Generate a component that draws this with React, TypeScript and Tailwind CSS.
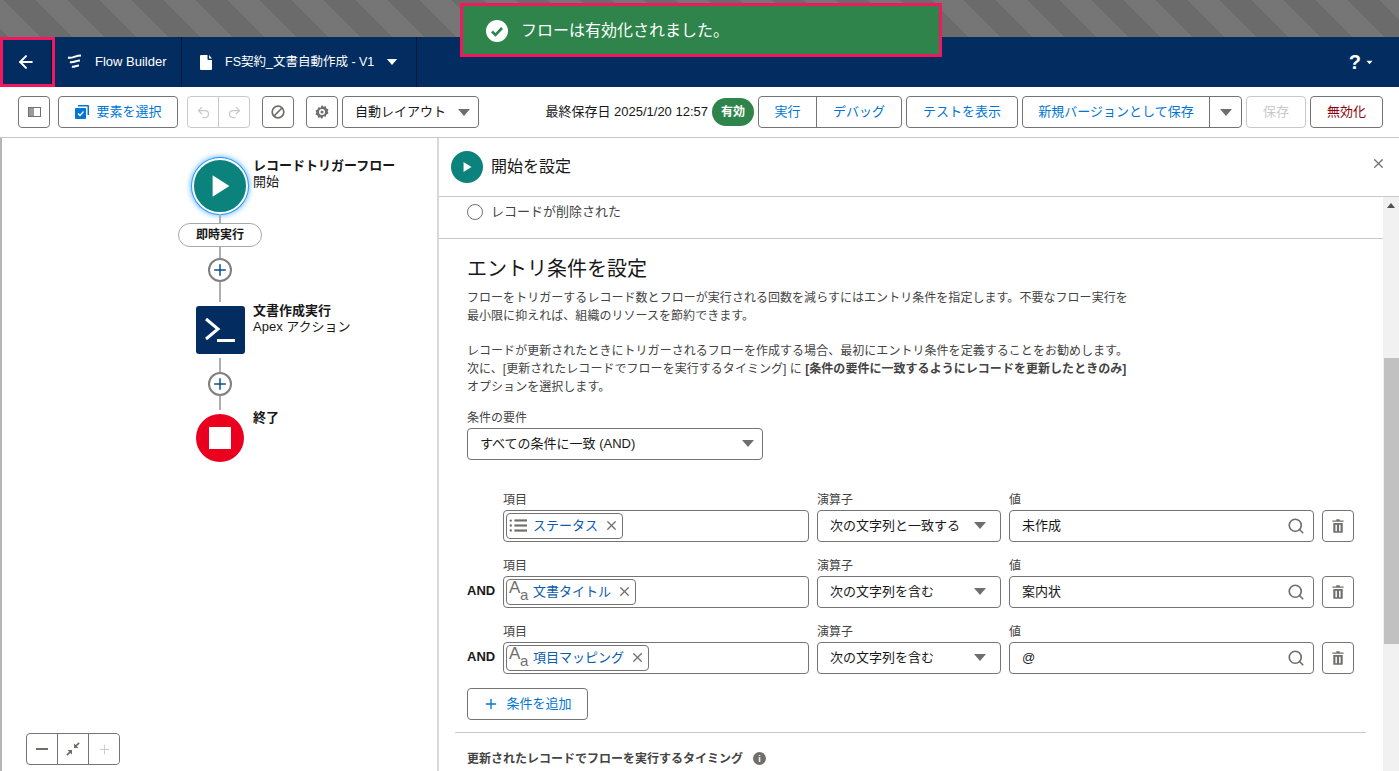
import { ArrowLeft, Plus, Search, X, Undo2, Redo2 } from "lucide-react";

const font = "font-['Liberation_Sans','Noto_Sans_CJK_JP',sans-serif]";

function Caret({ className = "h-[9px] w-[14px]" }: { className?: string }) {
  return (
    <svg viewBox="0 0 14 9" className={className}>
      <path d="M1 1h12L7 8z" fill="currentColor" />
    </svg>
  );
}

function Btn({ children, className = "" }: { children: React.ReactNode; className?: string }) {
  return (
    <div className={`flex h-8 items-center justify-center rounded border border-[#747474] bg-white text-[13px] ${className}`}>
      {children}
    </div>
  );
}

function PlayIcon({ className = "" }: { className?: string }) {
  return (
    <svg viewBox="0 0 16 20" className={className}>
      <path d="M1 1l14 9-14 9z" fill="white" />
    </svg>
  );
}

function TrashIcon() {
  return (
    <svg viewBox="0 0 14 16" className="h-[14px] w-[12px] text-[#706e6b]">
      <path fill="currentColor" d="M5 0h4v1.5h4.5V3H.5V1.5H5zM1.500 4.500h11V15a1 1 0 0 1-1 1h-9a1 1 0 0 1-1-1zM4 6.500V14h1.700V6.500zm4.300 0V14H10V6.500z" />
    </svg>
  );
}

function AaIcon() {
  return (
    <div className="relative h-[24px] w-[18px] shrink-0 text-[#706e6b]">
      <span className="absolute left-0 top-[-2px] text-[17px] font-medium leading-[20px]">A</span>
      <span className="absolute left-[11px] top-[5px] text-[15px] font-medium leading-[20px]">a</span>
    </div>
  );
}

function ListIcon() {
  return (
    <svg viewBox="0 0 20 16" className="h-[15px] w-[18px] shrink-0 text-[#706e6b]">
      <g fill="currentColor">
        <circle cx="2" cy="2.500" r="1.300" />
        <circle cx="2" cy="8" r="1.300" />
        <circle cx="2" cy="13.500" r="1.300" />
        <rect x="6" y="1.200" width="14" height="2.400" />
        <rect x="6" y="6.800" width="14" height="2.400" />
        <rect x="6" y="12.400" width="14" height="2.400" />
      </g>
    </svg>
  );
}

function PlusNode() {
  return (
    <div className="flex h-6 w-6 items-center justify-center rounded-full border-2 border-[#7f7f7f] bg-white text-[#0b4f8f]">
      <Plus size={18} strokeWidth={2} />
    </div>
  );
}

function Line({ h }: { h: string }) {
  return <div className={`w-[2px] bg-[#aeaeae] ${h}`} />;
}

const rows = [
  { and: false, icon: <ListIcon />, field: "ステータス", op: "次の文字列と一致する", value: "未作成" },
  { and: true, icon: <AaIcon />, field: "文書タイトル", op: "次の文字列を含む", value: "案内状" },
  { and: true, icon: <AaIcon />, field: "項目マッピング", op: "次の文字列を含む", value: "@" },
];

function ConditionRow({ and, icon, field, op, value }: (typeof rows)[number]) {
  return (
    <div className="flex items-end">
      <div className="mb-[7px] w-9 text-[13px] font-bold leading-[20px] text-[#181818]">{and ? "AND" : ""}</div>
      <div className="w-[306px]">
        <div className="mb-[1px] text-xs leading-[18px] text-[#444]">項目</div>
        <div className="flex h-8 items-center rounded border border-[#747474] px-[2px]">
          <div className="flex h-[26px] items-center rounded border border-[#747474] pl-[2px] pr-[3px]">
            {icon}
            <span className="ml-[6px] text-[13px] text-[#0b5cab]">{field}</span>
            <X size={15} className="ml-[6px] text-[#706e6b]" />
          </div>
        </div>
      </div>
      <div className="ml-2 w-[184px]">
        <div className="mb-[1px] text-xs leading-[18px] text-[#444]">演算子</div>
        <div className="flex h-8 items-center justify-between rounded border border-[#747474] pl-3 pr-[13px] text-[13px] text-[#181818]">
          {op}
          <Caret className="h-[9px] w-[14px] text-[#706e6b]" />
        </div>
      </div>
      <div className="ml-2 w-[305px]">
        <div className="mb-[1px] text-xs leading-[18px] text-[#444]">値</div>
        <div className="flex h-8 items-center justify-between rounded border border-[#747474] pl-3 pr-[8px] text-[13px] text-[#181818]">
          {value}
          <Search size={18} strokeWidth={2.2} className="text-[#706e6b]" />
        </div>
      </div>
      <Btn className="ml-2 w-8"><TrashIcon /></Btn>
    </div>
  );
}

function Canvas() {
  return (
    <div className="relative w-[439px] shrink-0 border-r-2 border-[#d8d8d8] bg-white">
      <div className="absolute left-0 top-0 h-full w-[2px] bg-[#b5b5b5]" />
      <div className="absolute left-[178px] top-5 flex w-[84px] flex-col items-center">
        <div className="flex h-[56px] w-[56px] items-center justify-center rounded-full border-2 border-white bg-[#0b827c] shadow-[0_0_0_1px_#1b96ff,0_0_5px_2px_#7ec3ff]">
          <PlayIcon className="ml-[2px] h-6 w-5" />
        </div>
        <Line h="h-[9px]" />
        <div className="flex h-6 w-[84px] items-center justify-center rounded-full border border-[#a9a9a9] bg-white text-xs font-bold text-[#181818]">
          即時実行
        </div>
        <Line h="h-[11px]" />
        <PlusNode />
        <Line h="h-5" />
        <div className="mt-1 flex h-[48px] w-[49px] items-center justify-center rounded-[3px] bg-[#032d60]">
          <svg viewBox="0 0 32 28" className="h-[28px] w-[32px]">
            <path d="M2 3l12 10L2 23" fill="none" stroke="white" strokeWidth="3" />
            <rect x="13" y="23" width="18" height="3" fill="white" />
          </svg>
        </div>
        <div className="mt-1"><Line h="h-[14px]" /></div>
        <PlusNode />
        <Line h="h-[14px]" />
        <div className="mt-1 flex h-[48px] w-[48px] items-center justify-center rounded-full bg-[#ea001e]">
          <div className="h-[22px] w-[22px] bg-white" />
        </div>
      </div>
      <div className="absolute left-[253px] top-[20px] text-[13px] leading-[16px] text-[#181818]">
        <div className="font-bold">レコードトリガーフロー</div>
        <div>開始</div>
      </div>
      <div className="absolute left-[253px] top-[165px] text-[13px] leading-[16px] text-[#181818]">
        <div className="font-bold">文書作成実行</div>
        <div>Apex アクション</div>
      </div>
      <div className="absolute left-[253px] top-[272px] text-[13px] font-bold leading-[16px] text-[#181818]">終了</div>
      <div className="absolute bottom-[6px] left-[26px] flex h-8 w-[94px] rounded border border-[#747474] bg-white">
        <div className="flex w-[31px] items-center justify-center border-r border-[#747474]">
          <div className="h-[2px] w-3 bg-[#706e6b]" />
        </div>
        <div className="flex w-[31px] items-center justify-center border-r border-[#747474]">
          <svg viewBox="0 0 14 14" className="h-[14px] w-[14px] text-[#706e6b]">
            <path fill="currentColor" d="M8 6V1.500l1.600 1.600L12.600.3l1.100 1.100-2.900 2.900L12.500 6zM6 8v4.500l-1.600-1.600-3 2.800-1.100-1.100 2.900-2.900L1.500 8z" />
          </svg>
        </div>
        <div className="flex flex-1 items-center justify-center rounded-r bg-white text-[#c9c9c9]">
          <Plus size={15} strokeWidth={1.5} />
        </div>
      </div>
    </div>
  );
}

function Panel() {
  return (
    <div className="flex min-w-0 flex-1 flex-col bg-white">
      <div className="flex h-[59px] shrink-0 items-center justify-between border-b border-[#c9c9c9] pl-3 pr-[13px]">
        <div className="flex items-center gap-2">
          <div className="flex h-8 w-8 items-center justify-center rounded-full bg-[#0b827c]">
            <PlayIcon className="h-3 w-[9px]" />
          </div>
          <span className="text-base text-[#181818]">開始を設定</span>
        </div>
        <X size={15} strokeWidth={2} className="mb-[7px] text-[#706e6b]" />
      </div>
      <div className="flex min-h-0 flex-1">
        <div className="min-w-0 flex-1 overflow-hidden">
          <div className="border-b border-[#c9c9c9] pb-[18px] pl-7 pt-[7px]">
            <div className="flex h-4 items-center gap-2 text-[13px] text-[#444]">
              <div className="h-4 w-4 rounded-full border border-[#747474]" />
              レコードが削除された
            </div>
          </div>
          <div className="pl-7 pt-[17px]">
            <h2 className="text-xl leading-[26px] text-[#181818]">エントリ条件を設定</h2>
            <p className="mt-[8px] text-xs leading-[17.8px] tracking-[0.04px] text-[#444]">
              フローをトリガーするレコード数とフローが実行される回数を減らすにはエントリ条件を指定します。不要なフロー実行を
              <br />
              最小限に抑えれば、組織のリソースを節約できます。
              <br />
              <br />
              レコードが更新されたときにトリガーされるフローを作成する場合、最初にエントリ条件を定義することをお勧めします。
              <br />
              次に、[更新されたレコードでフローを実行するタイミング] に <b>[条件の要件に一致するようにレコードを更新したときのみ]</b>
              <br />
              オプションを選択します。
            </p>
            <div className="mt-[12px] text-xs leading-[18px] text-[#444]">条件の要件</div>
            <div className="mt-[1px] flex h-8 w-[296px] items-center justify-between rounded border border-[#747474] pl-3 pr-[7px] text-[13px] text-[#181818]">
              すべての条件に一致 (AND)
              <Caret className="h-[9px] w-[14px] text-[#706e6b]" />
            </div>
            <div className="mt-[31px] flex flex-col gap-[15px]">
              {rows.map((r) => (
                <ConditionRow key={r.field} {...r} />
              ))}
            </div>
            <Btn className="mt-[14px] w-[121px] gap-[7px] text-[#0176d3]">
              <Plus size={16} strokeWidth={2} />
              条件を追加
            </Btn>
          </div>
          <div className="ml-4 mr-[17px] mt-3 border-t border-[#c9c9c9]" />
          <div className="flex items-center gap-[10px] pl-7 pt-[18px] text-xs font-bold text-[#444]">
            更新されたレコードでフローを実行するタイミング
            <div className="flex h-[13px] w-[13px] items-center justify-center rounded-full bg-[#706e6b] text-[9px] font-bold text-white">i</div>
          </div>
        </div>
        <div className="flex w-4 shrink-0 flex-col bg-[#f1f1f1]">
          <div className="flex h-[17px] items-center justify-center">
            <svg viewBox="0 0 8 5" className="h-[5px] w-2 text-[#505050]"><path d="M0 5l4-5 4 5z" fill="currentColor" /></svg>
          </div>
          <div className="mt-[144px] h-[286px] w-[15px] self-end bg-[#c1c1c1]" />
        </div>
      </div>
    </div>
  );
}

function Toolbar() {
  return (
    <div className="flex h-[51px] shrink-0 items-center border-b border-[#c9c9c9] bg-white pl-[18px] pr-4">
      <Btn className="w-8">
        <div className="flex h-[10px] w-[13px] border border-[#706e6b]"><div className="w-[5px] bg-[#9a9a9a]" /></div>
      </Btn>
      <Btn className="ml-2 w-[120px] gap-[7px] pl-[1px] text-[#0176d3]">
        <svg viewBox="0 0 14 14" className="h-[14px] w-[14px]">
          <path fill="#0176d3" d="M3 0h10a1 1 0 0 1 1 1v9h-1.500V1.500H3z" />
          <path fill="#0176d3" d="M1 3h9a1 1 0 0 1 1 1v9a1 1 0 0 1-1 1H1a1 1 0 0 1-1-1V4a1 1 0 0 1 1-1z" />
          <path fill="none" stroke="white" strokeWidth="1.300" d="M3 8.500l2 2 3.500-4" />
        </svg>
        要素を選択
      </Btn>
      <div className="ml-[9px] flex h-8 w-[63px] rounded border border-[#c9c9c9]">
        <div className="flex flex-1 items-center justify-center border-r border-[#c9c9c9] text-[#c9c9c9]"><Undo2 size={15} /></div>
        <div className="flex flex-1 items-center justify-center text-[#c9c9c9]"><Redo2 size={15} /></div>
      </div>
      <Btn className="ml-3 w-8">
        <svg viewBox="0 0 14 14" className="h-[14px] w-[14px]">
          <circle cx="7" cy="7" r="5.800" fill="none" stroke="#706e6b" strokeWidth="1.700" />
          <path d="M3 11l8-8" stroke="#706e6b" strokeWidth="1.700" />
        </svg>
      </Btn>
      <Btn className="ml-3 w-8">
        <svg viewBox="0 0 14 14" className="h-[14px] w-[14px]">
          <path fill="#706e6b" d="M7 0l1.500 1.700 2.300-.5.600 2.200 2.100 1-.8 2.100.8 2.100-2.100 1-.6 2.200-2.300-.5L7 14l-1.500-1.700-2.300.5-.6-2.200-2.100-1 .8-2.100-.8-2.100 2.100-1 .6-2.200 2.300.5z" />
          <circle cx="7" cy="7" r="3" fill="white" />
          <circle cx="7" cy="7" r="1.500" fill="#706e6b" />
        </svg>
      </Btn>
      <div className="ml-1 flex h-8 w-[137px] items-center justify-between rounded border border-[#747474] pl-3 pr-[7px] text-[13px] text-[#181818]">
        自動レイアウト
        <Caret className="h-[9px] w-[14px] text-[#706e6b]" />
      </div>
      <span className="ml-auto whitespace-nowrap text-[13px] text-[#181818]">最終保存日 2025/1/20 12:57</span>
      <div className="ml-1 flex h-7 w-[42px] items-center justify-center rounded-full bg-[#2e844a] text-xs font-bold text-white">有効</div>
      <div className="ml-1 flex h-8 w-[144px] rounded border border-[#747474] text-[13px] text-[#0176d3]">
        <div className="flex w-[58px] items-center justify-center border-r border-[#747474]">実行</div>
        <div className="flex flex-1 items-center justify-center">デバッグ</div>
      </div>
      <Btn className="ml-1 w-[112px] text-[#0176d3]">テストを表示</Btn>
      <div className="ml-1 flex h-8 w-[220px] rounded border border-[#747474] text-[13px] text-[#0176d3]">
        <div className="flex flex-1 items-center justify-center border-r border-[#747474]">新規バージョンとして保存</div>
        <div className="flex w-[31px] items-center justify-center text-[#706e6b]"><Caret /></div>
      </div>
      <div className="ml-1 flex h-8 w-[60px] items-center justify-center rounded border border-[#c9c9c9] text-[13px] text-[#c9c9c9]">保存</div>
      <Btn className="ml-1 w-[73px] text-[#8e030f]">無効化</Btn>
    </div>
  );
}

function NavBar() {
  return (
    <div className="flex h-[50px] shrink-0 items-stretch bg-[#032d60] text-white">
      <div className="flex w-[52px] items-center justify-center border-r border-[#01183a]">
        <ArrowLeft size={20} strokeWidth={2.4} />
      </div>
      <div className="flex w-[130px] items-center border-r border-[#01183a] pl-[15px] text-[13px]">
        <svg viewBox="0 0 16 16" className="h-4 w-4">
          <path d="M1 3.500c4 1.500 7-2 13-2M3 8c3 1 6-1.500 10-1.500M5 12.500c2 1 4-1 7-1" fill="none" stroke="white" strokeWidth="2" />
        </svg>
        <span className="ml-[12px]">Flow Builder</span>
      </div>
      <div className="flex w-[235px] items-center border-r border-[#01183a] pl-[18px] text-[12.5px]">
        <svg viewBox="0 0 12 15" className="h-[15px] w-3">
          <path fill="white" d="M1 0h6.500v4a1 1 0 0 0 1 1H12v9a1 1 0 0 1-1 1H1a1 1 0 0 1-1-1V1a1 1 0 0 1 1-1zM9 0l3 3.500H9z" />
        </svg>
        <span className="ml-[13px]">FS契約_文書自動作成 - V1</span>
        <Caret className="ml-[12px] h-[8px] w-[12px]" />
      </div>
      <div className="ml-auto flex items-center gap-[5px] pr-[26px]">
        <span className="text-[20px] font-bold leading-none">?</span>
        <Caret className="h-[5px] w-[7px]" />
      </div>
    </div>
  );
}

export default function App() {
  return (
    <div className={`relative flex h-[771px] w-[1399px] flex-col overflow-hidden bg-white ${font}`}>
      <div className="h-[37px] shrink-0 bg-[repeating-linear-gradient(45deg,#6b6b6b_0,#6b6b6b_5.9px,#767676_5.9px,#767676_28.5px,#6b6b6b_28.5px,#6b6b6b_45.25px)]" />
      <NavBar />
      <Toolbar />
      <div className="flex min-h-0 flex-1">
        <Canvas />
        <Panel />
      </div>
      <div className="absolute left-0 top-[37px] h-[50px] w-[55px] border-[3px] border-[#f0185f]" />
      <div className="absolute left-[460px] top-[3px] flex h-[54px] w-[482px] items-center border-[3px] border-[#f0185f] bg-[#2e844a] pl-[23px] pt-[1px] text-base text-white">
        <svg viewBox="0 0 22 22" className="h-[22px] w-[22px]">
          <circle cx="11" cy="11" r="11" fill="white" />
          <path d="M6 11.500l3.500 3.500L16 8" fill="none" stroke="#2e844a" strokeWidth="2.600" />
        </svg>
        <span className="ml-[13px]">フローは有効化されました。</span>
      </div>
    </div>
  );
}
